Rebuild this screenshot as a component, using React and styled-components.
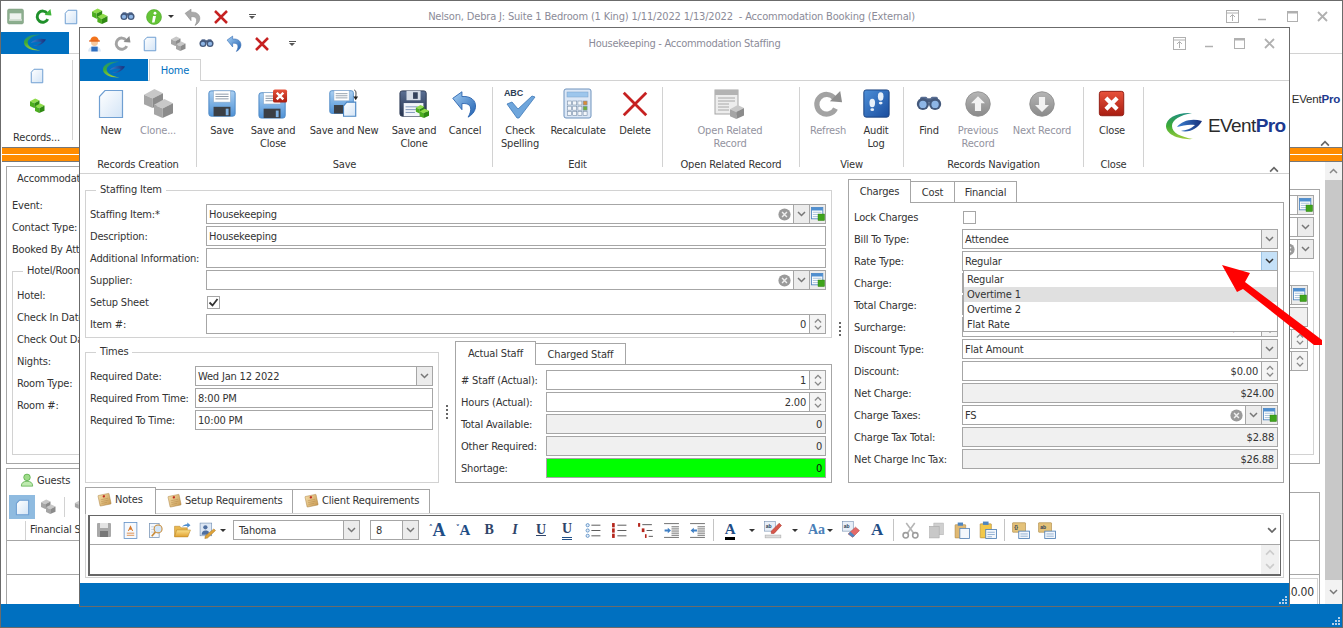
import React from 'react';
import styled, { createGlobalStyle } from 'styled-components';

const GlobalStyle = createGlobalStyle`
  html, body { margin: 0; padding: 0; background: #fff; overflow: hidden; }
  * { box-sizing: border-box; }
  body {
    font-family: "DejaVu Sans Condensed", "DejaVu Sans", "Noto Sans", sans-serif;
    font-size: 11px;
    letter-spacing: -0.18px;
    color: #333;
  }
`;

const line = '#a6a6a6';
const pale = '#d2d2d2';
const blue = '#0070c0';

/* ---------- drawings ---------- */

const Svg = ({ size = 32, vb = 32, children }) => (
  <svg width={size} height={size} viewBox={`0 0 ${vb} ${vb}`} style={{ display: 'block' }}>
    {children}
  </svg>
);

const Defs = styled.svg`
  position: absolute;
  width: 0;
  height: 0;
`;

const SharedGradients = () => (
  <Defs>
    <defs>
      <linearGradient id="pageFill" x1="0" y1="0" x2="1" y2="1">
        <stop offset="0" stopColor="#ffffff" />
        <stop offset="1" stopColor="#d3e4f6" />
      </linearGradient>
      <linearGradient id="floppy" x1="0" y1="0" x2="0" y2="1">
        <stop offset="0" stopColor="#a9cff2" />
        <stop offset="1" stopColor="#4f92d6" />
      </linearGradient>
      <linearGradient id="navy" x1="0" y1="0" x2="0" y2="1">
        <stop offset="0" stopColor="#5a6f94" />
        <stop offset="1" stopColor="#27344f" />
      </linearGradient>
      <linearGradient id="undo" x1="0" y1="0" x2="1" y2="1">
        <stop offset="0" stopColor="#a5d0f5" />
        <stop offset="1" stopColor="#1f5fb0" />
      </linearGradient>
      <linearGradient id="redBox" x1="0" y1="0" x2="0" y2="1">
        <stop offset="0" stopColor="#e8533c" />
        <stop offset="1" stopColor="#a81c10" />
      </linearGradient>
      <linearGradient id="ball" x1="0" y1="0" x2="0" y2="1">
        <stop offset="0" stopColor="#b5b5b5" />
        <stop offset="1" stopColor="#8a8a8a" />
      </linearGradient>
      <linearGradient id="book" x1="0" y1="0" x2="1" y2="1">
        <stop offset="0" stopColor="#4d8fd8" />
        <stop offset="1" stopColor="#1a4d9e" />
      </linearGradient>
      <linearGradient id="crescent" x1="0" y1="0" x2="0" y2="1">
        <stop offset="0" stopColor="#1f8f7f" />
        <stop offset="0.5" stopColor="#3dab35" />
        <stop offset="1" stopColor="#9ccc3c" />
      </linearGradient>
      <linearGradient id="lens" x1="0" y1="0" x2="1" y2="0">
        <stop offset="0" stopColor="#3a7fd0" />
        <stop offset="1" stopColor="#17307a" />
      </linearGradient>
      <linearGradient id="note" x1="0" y1="0" x2="1" y2="1">
        <stop offset="0" stopColor="#f4dca6" />
        <stop offset="1" stopColor="#c99a52" />
      </linearGradient>
      <linearGradient id="folder" x1="0" y1="0" x2="0" y2="1">
        <stop offset="0" stopColor="#fbe08a" />
        <stop offset="1" stopColor="#e0a030" />
      </linearGradient>
    </defs>
  </Defs>
);

const PageIcon = ({ size = 32 }) => (
  <Svg size={size}>
    <path d="M10 2.500h17.500v27H4.500V8.500z" fill="url(#pageFill)" stroke="#6f9fd2" strokeWidth={size < 24 ? 2 : 1.200} />
  </Svg>
);

const Cube = ({ x, y, s, tone }) => {
  const c = tone === 'green' ? ['#8fdc4a', '#4cae1f', '#2f8a12'] : ['#c8c8c8', '#a5a5a5', '#8b8b8b'];
  return (
    <g>
      <polygon points={`${x},${y + s * 0.3} ${x + s * 0.55},${y} ${x + s},${y + s * 0.22} ${x + s * 0.45},${y + s * 0.5}`} fill={c[0]} />
      <polygon points={`${x},${y + s * 0.3} ${x + s * 0.45},${y + s * 0.5} ${x + s * 0.45},${y + s} ${x},${y + s * 0.8}`} fill={c[1]} />
      <polygon points={`${x + s * 0.45},${y + s * 0.5} ${x + s},${y + s * 0.22} ${x + s},${y + s * 0.75} ${x + s * 0.45},${y + s}`} fill={c[2]} />
    </g>
  );
};

const CubesIcon = ({ size = 32, tone = 'grey' }) => (
  <Svg size={size}>
    <Cube x={2} y={1} s={19} tone={tone} />
    <Cube x={12} y={11} s={19} tone={tone} />
  </Svg>
);

const FloppyBase = ({ navy }) => (
  <g>
    <rect x="2" y="2" width="28" height="27" rx="2.500" fill={navy ? 'url(#navy)' : 'url(#floppy)'} stroke={navy ? '#2a3650' : '#4a86c4'} />
    {navy ? (
      <g>
        <rect x="9" y="2" width="15" height="10" fill="#d6dde8" />
        <rect x="16" y="3.500" width="5" height="7" fill="#33415c" />
        <rect x="6" y="15" width="21" height="14" fill="#f2f5fa" />
        <path d="M8 19h13M8 22h15M8 25h10" stroke="#7c94b8" strokeWidth="1" />
      </g>
    ) : (
      <g>
        <rect x="7" y="2" width="18" height="12" fill="#fff" stroke="#8aa9c9" strokeWidth="0.6" />
        <path d="M9 5.500h14M9 8h14M9 10.500h14" stroke="#8794a3" strokeWidth="1" />
        <rect x="7" y="19" width="18" height="10" fill="#3b3f45" />
        <rect x="20" y="21" width="3" height="7" fill="#7fb2e4" />
      </g>
    )}
  </g>
);

const SaveIcon = () => (
  <Svg size={30}>
    <FloppyBase />
  </Svg>
);

const SaveCloseIcon = () => (
  <Svg size={30}>
    <g transform="translate(-1 2)">
      <FloppyBase />
    </g>
    <rect x="16" y="0.500" width="15" height="14" rx="2" fill="url(#redBox)" />
    <path d="M20 4l7 7M27 4l-7 7" stroke="#fff" strokeWidth="2.600" />
  </Svg>
);

const SaveNewIcon = () => (
  <Svg size={30}>
    <g transform="translate(-1 0) scale(0.9)">
      <FloppyBase />
    </g>
    <path d="M19 14h9.500v15H15.500v-11z" fill="url(#pageFill)" stroke="#4a86c4" strokeWidth="1.200" />
    <path d="M27 1c2 1 2 3 1.500 8" fill="none" stroke="#222" />
    <path d="M26 8h5l-2.500 4z" fill="#222" />
  </Svg>
);

const SaveCloneIcon = () => (
  <Svg size={30}>
    <g transform="translate(-1 0)">
      <FloppyBase navy />
    </g>
    <Cube x={18} y={17} s={9} tone="green" />
    <Cube x={22} y={21} s={10} tone="green" />
  </Svg>
);

const UndoIcon = ({ size = 28 }) => (
  <Svg size={size}>
    <path
      d="M2 9.500L12.500 2v5.500C22 6.500 29 11.500 28 20c-.6 5-4.500 9-8.500 11 2.500-4 4.500-10 1.500-13.500-2-2-5-2.200-8.500-2v7z"
      fill="url(#undo)"
      stroke="#2a62ad"
      strokeWidth="1"
    />
  </Svg>
);

const GreyUndoIcon = ({ size = 18 }) => (
  <Svg size={size}>
    <path
      d="M2 9.500L12.500 2v5.500C22 6.500 29 11.500 28 20c-.6 5-4.500 9-8.500 11 2.500-4 4.500-10 1.500-13.500-2-2-5-2.200-8.500-2v7z"
      fill="#a9a9a9"
      stroke="#8a8a8a"
    />
  </Svg>
);

const CrossIcon = ({ size = 30, bold }) => (
  <Svg size={size}>
    <path d="M4 4l24 24M28 4L4 28" stroke="#c62121" strokeWidth={bold ? 5 : 3} strokeLinecap="butt" />
  </Svg>
);

const IconLabel = styled.text`
  font-family: "Liberation Sans", sans-serif;
  font-weight: 700;
  font-size: 9px;
  fill: #2c3e55;
`;

const SpellIcon = () => (
  <Svg>
    <IconLabel x="0" y="8">ABC</IconLabel>
    <path d="M3 16l5-2 6 7L28 8l3 1-16 21h-2z" fill="#6fa6dc" stroke="#3f78b8" strokeWidth="0.8" />
  </Svg>
);

const CalcIcon = () => (
  <Svg>
    <rect x="2" y="1" width="27" height="29" rx="2" fill="#dbe7f6" stroke="#6f93bd" />
    <rect x="5" y="4" width="21" height="5" fill="#9dc6ec" stroke="#7aa0c8" strokeWidth="0.5" />
    {[0, 1, 2, 3].map((c) =>
      [0, 1, 2].map((r) => (
        <rect
          key={`${c}${r}`}
          x={5.5 + c * 5.2}
          y={13 + r * 5.2}
          width="4"
          height="4"
          fill={c === 3 && r === 0 ? '#d98b3a' : c === 3 && r === 1 ? '#6fb03a' : '#f3f6fa'}
          stroke="#7a8fa8"
          strokeWidth="0.6"
        />
      )),
    )}
  </Svg>
);

const RelatedIcon = () => (
  <Svg>
    <rect x="1" y="2" width="23" height="24" fill="#ededed" stroke="#a5a5a5" />
    <rect x="1" y="2" width="23" height="5" fill="#b3b3b3" />
    <path d="M4 10h17M4 13h17M4 16h11M4 19h11M4 22h11" stroke="#a8a8a8" />
    <Cube x={16} y={17} s={14} tone="grey" />
  </Svg>
);

const RefreshIcon = ({ size = 30, color = '#a3a3a3', head = '#8e8e8e' }) => (
  <Svg size={size}>
    <path d="M24 21a10.500 10.500 0 1 1-1-11" fill="none" stroke={color} strokeWidth="5.500" />
    <path d="M18 13L31 14 29 2z" fill={head} />
  </Svg>
);

const AuditIcon = () => (
  <Svg size={30}>
    <rect x="3" y="1" width="27" height="29" rx="2.500" fill="url(#book)" stroke="#17407f" />
    <ellipse cx="21" cy="8" rx="3" ry="4.500" fill="#e8f0fa" />
    <ellipse cx="21" cy="15" rx="2" ry="1.500" fill="#e8f0fa" />
    <ellipse cx="12" cy="15" rx="3" ry="4.500" fill="#e8f0fa" />
    <ellipse cx="12" cy="22" rx="2" ry="1.500" fill="#e8f0fa" />
  </Svg>
);

const BinocularsIcon = ({ size = 26 }) => (
  <Svg size={size}>
    <rect x="12" y="9" width="8" height="5" fill="#4c5f80" />
    <rect x="5" y="7" width="9" height="5" rx="2" fill="#5a6f94" />
    <rect x="18" y="7" width="9" height="5" rx="2" fill="#5a6f94" />
    <circle cx="8.500" cy="16" r="7.500" fill="#44597c" />
    <circle cx="23.500" cy="16" r="7.500" fill="#44597c" />
    <circle cx="8.500" cy="16.500" r="4.500" fill="#8eb6e6" />
    <circle cx="23.500" cy="16.500" r="4.500" fill="#8eb6e6" />
  </Svg>
);

const ArrowBallIcon = ({ down }) => (
  <Svg size={28}>
    <circle cx="16" cy="16" r="14" fill="url(#ball)" stroke="#8f8f8f" />
    <path
      d={down ? 'M12.500 8h7v9h4.500L16 25 8 17h4.500z' : 'M12.500 24h7v-9h4.500L16 7 8 15h4.500z'}
      fill="#f2f2f2"
    />
  </Svg>
);

const CloseBoxIcon = () => (
  <Svg size={30}>
    <rect x="2.500" y="2.500" width="26" height="26" rx="2.500" fill="url(#redBox)" stroke="#8f1a10" />
    <path d="M9.500 9.500l12 12M21.500 9.500l-12 12" stroke="#fff" strokeWidth="4.500" />
  </Svg>
);

const PersonIcon = () => (
  <Svg size={17}>
    <circle cx="16" cy="14" r="6.500" fill="#f6c9a0" />
    <path d="M8 11a8 8 0 0 1 16 0z" fill="#f2731c" />
    <rect x="6" y="10" width="20" height="2.500" fill="#e05a10" />
    <path d="M4 31c0-7 5-10 12-10s12 3 12 10z" fill="#dce8f5" />
    <path d="M10 22h12v9H10z" fill="#2f6fc0" />
  </Svg>
);

const BedIcon = () => (
  <Svg size={17}>
    <rect x="1" y="2" width="30" height="28" rx="3" fill="#8cae8e" stroke="#7a9a7c" />
    <rect x="5" y="10" width="22" height="11" fill="#eef3ee" />
    <rect x="4" y="21" width="24" height="3" fill="#dfe8df" />
  </Svg>
);

const InfoIcon = () => (
  <Svg size={16}>
    <circle cx="16" cy="16" r="15" fill="#64c437" stroke="#3f9c1c" />
    <circle cx="18" cy="8.500" r="2.800" fill="#fff" />
    <path d="M14 14h6l-3 13h-5z" fill="#fff" />
  </Svg>
);

const AddTableIcon = () => (
  <Svg size={14} vb={16}>
    <rect x="0.500" y="0.500" width="13" height="13" fill="#fff" stroke="#4f86c0" />
    <rect x="0.500" y="0.500" width="13" height="3.500" fill="#4f8fd0" />
    <path d="M2 6h10M2 8.500h10M2 11h10" stroke="#9db9d6" />
    <rect x="8" y="8" width="7.500" height="7.500" fill="#3fa41c" stroke="#2c7d12" strokeWidth="0.5" />
  </Svg>
);

const ClearIcon = () => (
  <Svg size={13} vb={16}>
    <circle cx="8" cy="8" r="7.500" fill="#9a9a9a" />
    <path d="M5 5l6 6M11 5l-6 6" stroke="#eee" strokeWidth="1.800" />
  </Svg>
);

const ChevSvg = styled.svg`
  display: block;
  flex: none;
`;

const Chev = ({ up, color = '#777', w = 9 }) => (
  <ChevSvg width={w} height={w * 0.67} viewBox="0 0 9 6">
    <path d={up ? 'M1 5l3.500-3.500L8 5' : 'M1 1l3.500 3.500L8 1'} fill="none" stroke={color} strokeWidth="1.500" />
  </ChevSvg>
);

const NoteIcon = () => (
  <Svg size={15}>
    <g transform="rotate(-12 16 16)">
      <rect x="4" y="5" width="24" height="23" rx="1" fill="url(#note)" stroke="#a9803f" />
      <path d="M8 15h16M8 19h16M8 23h12" stroke="#b58c4d" />
      <circle cx="16" cy="9" r="2.500" fill="#c12b1f" />
    </g>
  </Svg>
);

const GuestIcon = () => (
  <Svg size={14}>
    <circle cx="16" cy="10" r="7.500" fill="#9fdc8a" stroke="#4aa43a" strokeWidth="1.500" />
    <path d="M3 30c0-8 5-11 13-11s13 3 13 11z" fill="#bfeab0" stroke="#4aa43a" strokeWidth="1.500" />
  </Svg>
);

const Swoosh = ({ w = 36 }) => (
  <svg width={w} height={w * 0.78} viewBox="0 0 36 28" style={{ display: 'block' }}>
    <path d="M26 1C11 0 0 6 0 14c0 8 12 14 27 13C15 25 6 21 6 14 6 8 14 3 26 1z" fill="url(#crescent)" />
    <path d="M11 15C16 9 25 6 36 9c-4 7-12 12-21 10 5-1 10-2 14-6-5-1-12 0-18 2z" fill="url(#lens)" />
  </svg>
);

/* toolbar drawings */
const TbSave = () => (
  <Svg size={16}>
    <rect x="2" y="2" width="28" height="28" rx="2" fill="#a8a8a8" />
    <rect x="8" y="2" width="16" height="10" fill="#e4e4e4" />
    <rect x="8" y="18" width="16" height="12" fill="#777" />
  </Svg>
);

const TbDoc = () => (
  <Svg size={17}>
    <rect x="4" y="1" width="24" height="30" fill="#f6f9fd" stroke="#5f8fc6" strokeWidth="1.500" />
    <path d="M16 6l-5 11h2l1-2.500h4l1 2.500h2z" fill="#d87a2c" />
    <path d="M9 21h14M9 25h14" stroke="#d87a2c" strokeWidth="1.500" />
  </Svg>
);

const TbFind = () => (
  <Svg size={17}>
    <rect x="3" y="3" width="18" height="26" fill="#f5f8fc" stroke="#7d98b8" strokeWidth="1.500" />
    <path d="M6 9h12M6 14h7M6 19h7" stroke="#9db0c6" />
    <circle cx="19" cy="13" r="7.500" fill="#d3e6f8" stroke="#c98a35" strokeWidth="2" />
    <path d="M14 19l-7 8" stroke="#c98a35" strokeWidth="3" />
  </Svg>
);

const TbOpen = () => (
  <Svg size={17}>
    <path d="M1 8h10l2 3h12v16H1z" fill="#e9b84f" stroke="#b8862a" />
    <path d="M5 15h26l-5 13H1z" fill="url(#folder)" stroke="#b8862a" />
    <path d="M15 9c3-4 7-5 10-5V1l6 5-6 5V7.500c-3 0-6 0-10 1.500z" fill="#4f8fd0" />
  </Svg>
);

const TbEdit = () => (
  <Svg size={17}>
    <rect x="2" y="2" width="22" height="24" fill="#dde7f4" stroke="#5f7fa8" />
    <circle cx="12" cy="10" r="4" fill="#4f6fa0" />
    <path d="M5 24c0-6 3-8 7-8s6 1 7 3l-3 5z" fill="#4f6fa0" />
    <path d="M28 13l3 3-15 14-5 1 1-5z" fill="#e0a43a" stroke="#a8741c" />
  </Svg>
);

const Caret = styled.span`
  display: block;
  width: 0;
  height: 0;
  margin-left: ${(p) => p.$ml || 0}px;
  border-left: 3.500px solid transparent;
  border-right: 3.500px solid transparent;
  border-top: 3.500px solid #333;
`;

const ListBullets = () => (
  <Svg size={17}>
    {[6, 16, 26].map((y) => (
      <g key={y}>
        <circle cx="5" cy={y} r="3" fill="#e4eef9" stroke="#4f86c0" strokeWidth="1.500" />
        <path d={`M12 ${y}h17`} stroke="#333" strokeWidth="1.500" />
      </g>
    ))}
  </Svg>
);

const ListNumbers = () => (
  <Svg size={17}>
    {[6, 16, 26].map((y) => (
      <g key={y}>
        <rect x="2" y={y - 4} width="5" height="8" fill="#b5261c" />
        <path d={`M12 ${y}h17`} stroke="#333" strokeWidth="1.500" />
      </g>
    ))}
  </Svg>
);

const ListMulti = () => (
  <Svg size={17}>
    <rect x="2" y="2" width="4" height="7" fill="#b5261c" />
    <path d="M10 5h18" stroke="#333" strokeWidth="1.500" />
    <rect x="9" y="12" width="5" height="7" fill="#b5261c" />
    <path d="M18 16h11" stroke="#333" strokeWidth="1.500" />
    <rect x="15" y="23" width="3" height="7" fill="#b5261c" />
    <path d="M22 27h8" stroke="#333" strokeWidth="1.500" />
  </Svg>
);

const Indent = ({ flip }) => (
  <Svg size={17}>
    <path d="M2 3h28M2 29h28M16 9h14M16 13h14M16 17h14M16 21h14M16 25h14" stroke="#333" strokeWidth="1.300" />
    <path d={flip ? 'M3 16l6-5v3h6v4H9v3z' : 'M15 16l-6-5v3H3v4h6v3z'} fill="#3f7fc4" />
  </Svg>
);

const TbHighlight = () => (
  <Svg size={18}>
    <rect x="1" y="1" width="19" height="17" fill="#e8eff8" stroke="#6c88ac" />
    <IconLabel x="3" y="13">ab</IconLabel>
    <path d="M27 4l4 4-13 14h-5v-4z" fill="#d8574a" stroke="#a8332a" />
    <rect x="2" y="25" width="28" height="5" fill="#ddd" stroke="#aaa" />
  </Svg>
);

const TbEraser = () => (
  <Svg size={18}>
    <rect x="1" y="1" width="19" height="17" fill="#e8eff8" stroke="#6c88ac" />
    <IconLabel x="3" y="13">ab</IconLabel>
    <path d="M24 11l7 6-12 12-8-6z" fill="#e46a68" stroke="#b03c3a" />
    <path d="M15 19l8 7-4 3-8-6z" fill="#4f86c0" />
  </Svg>
);

const TbCut = () => (
  <Svg size={17}>
    <path d="M8 2l14 19M24 2L10 21" stroke="#b5b5b5" strokeWidth="3" />
    <circle cx="7" cy="25" r="5" fill="none" stroke="#9d9d9d" strokeWidth="3" />
    <circle cx="25" cy="25" r="5" fill="none" stroke="#9d9d9d" strokeWidth="3" />
  </Svg>
);

const TbCopy = () => (
  <Svg size={17}>
    <rect x="11" y="2" width="18" height="22" fill="#d0d0d0" stroke="#b0b0b0" />
    <rect x="3" y="8" width="18" height="22" fill="#c8c8c8" stroke="#a5a5a5" />
  </Svg>
);

const TbPaste = ({ special }) => (
  <Svg size={special ? 18 : 17}>
    <rect x="2" y="5" width="20" height="25" rx="1" fill={special ? '#f2c84a' : '#e0b973'} stroke="#a8803a" />
    <rect x="7" y="1" width="10" height="6" fill="#4f86c0" />
    <rect x={special ? 12 : 11} y={special ? 15 : 12} width={special ? 19 : 18} height={special ? 16 : 19} fill="#f3f7fc" stroke="#4f7fb5" strokeWidth="1.500" />
    {special && <path d="M15 20h13M15 24h13M15 28h8" stroke="#4f7fb5" />}
  </Svg>
);

const TbField = ({ text }) => (
  <Svg size={18}>
    <rect x="1" y="3" width="23" height="17" rx="1" fill="#e4c27a" stroke="#a5803a" />
    <IconLabel x="4" y="15">{text}</IconLabel>
    <rect x="12" y="18" width="19" height="13" fill="#f3f7fc" stroke="#4f7fb5" strokeWidth="1.500" />
    <path d="M15 23h13M15 27h13" stroke="#4f7fb5" />
  </Svg>
);

const RedArrow = styled.svg`
  position: absolute;
  left: 0;
  top: 0;
  z-index: 10;
  pointer-events: none;
`;

/* ---------- window chrome ---------- */

const Desktop = styled.div`
  position: relative;
  width: 1343px;
  height: 628px;
  overflow: hidden;
  background: #fff;
`;

const BackWindow = styled.div`
  display: flex;
  flex-direction: column;
  width: 1343px;
  height: 628px;
  border: 1px solid #6b6b6b;
  background: #fff;
`;

const FrontWindow = styled.div`
  position: absolute;
  left: 79px;
  top: 27px;
  width: 1211px;
  height: 580px;
  display: flex;
  flex-direction: column;
  border: 1px solid #6b6b6b;
  background: #fff;
  z-index: 2;
`;

const TitleBar = styled.div`
  display: grid;
  grid-template-columns: 1fr auto 1fr;
  align-items: center;
  flex: none;
  height: ${(p) => p.$h}px;
`;

const QuickAccess = styled.div`
  display: flex;
  align-items: center;
`;

const QuickSlot = styled.div`
  display: flex;
  align-items: center;
  justify-content: center;
  flex: none;
  gap: 6px;
  width: ${(p) => p.$w || 28}px;
  height: 24px;
  margin-left: ${(p) => p.$ml || 0}px;
`;

const MoreMark = styled.div`
  width: 7px;
  border-top: 1px solid #555;
  padding-top: 1px;
  &::after {
    content: '';
    display: block;
    width: 0;
    height: 0;
    border-left: 3.500px solid transparent;
    border-right: 3.500px solid transparent;
    border-top: 3.500px solid #555;
  }
`;

const WindowTitle = styled.div`
  font-size: 11px;
  letter-spacing: ${(p) => p.$ls}px;
  color: #8b8b98;
  white-space: nowrap;
`;

const WindowControls = styled.div`
  display: flex;
  justify-content: flex-end;
  align-items: center;
  padding-right: ${(p) => p.$pr}px;
`;

const ControlSlot = styled.div`
  width: 30px;
  display: flex;
  justify-content: center;
`;

const Controls = ({ pr }) => (
  <WindowControls $pr={pr}>
    <ControlSlot>
      <Svg size={13} vb={13}>
        <rect x="0.500" y="0.500" width="12" height="12" fill="none" stroke="#b0b0b0" />
        <path d="M1 3h11M6.500 11V5M4 7l2.500-2.500L9 7" fill="none" stroke="#b0b0b0" />
      </Svg>
    </ControlSlot>
    <ControlSlot>
      <Svg size={13} vb={13}>
        <path d="M2 9.500h8" stroke="#b0b0b0" strokeWidth="1.500" />
      </Svg>
    </ControlSlot>
    <ControlSlot>
      <Svg size={11} vb={11}>
        <rect x="0.500" y="0.500" width="10" height="10" fill="none" stroke="#b0b0b0" />
        <path d="M0 1.500h11" stroke="#b0b0b0" strokeWidth="2" />
      </Svg>
    </ControlSlot>
    <ControlSlot>
      <Svg size={11} vb={11}>
        <path d="M1 1l9 9M10 1l-9 9" stroke="#b0b0b0" strokeWidth="1.800" />
      </Svg>
    </ControlSlot>
  </WindowControls>
);

const TabLine = styled.div`
  display: flex;
  flex: none;
  height: 22px;
  border-bottom: 1px solid ${pale};
`;

const AppButton = styled.div`
  display: flex;
  align-items: center;
  justify-content: center;
  width: 68px;
  height: 22px;
  flex: none;
  background: ${blue};
`;

const HomeTab = styled.div`
  display: flex;
  align-items: center;
  justify-content: center;
  width: 52px;
  height: 22px;
  color: ${blue};
  background: #fff;
  border: 1px solid ${pale};
  border-bottom: 0;
  margin-left: 1px;
`;

const Ribbon = styled.div`
  display: flex;
  flex: none;
  height: 93px;
  padding-top: 6px;
  border-bottom: 1px solid ${pale};
`;

const RibbonGroup = styled.div`
  display: flex;
  flex-direction: column;
  flex: none;
  width: ${(p) => p.$w}px;
  height: 80px;
  padding-left: ${(p) => p.$pl || 0}px;
  border-right: 1px solid ${pale};
`;

const RibbonButtons = styled.div`
  display: flex;
  flex: none;
  height: 71px;
`;

const RibbonCaption = styled.div`
  margin-left: ${(p) => -(p.$pl || 0)}px;
  text-align: center;
  line-height: 13px;
  white-space: nowrap;
`;

const RibbonItem = styled.div`
  display: flex;
  flex-direction: column;
  align-items: center;
  flex: none;
  width: ${(p) => p.$w}px;
  padding-top: 1px;
  text-align: center;
  line-height: 13px;
  color: ${(p) => (p.$off ? '#9393a0' : '#333')};
`;

const RibbonIconBox = styled.div`
  display: flex;
  align-items: center;
  justify-content: center;
  height: 32px;
  margin-bottom: 4px;
  flex: none;
`;

const RibbonButton = ({ w, off, icon, children }) => (
  <RibbonItem $w={w} $off={off}>
    <RibbonIconBox>{icon}</RibbonIconBox>
    {children}
  </RibbonItem>
);

const LogoGroup = styled.div`
  display: flex;
  flex-direction: column;
  flex: 1;
  padding-top: 25px;
`;

const LogoRow = styled.div`
  display: flex;
  align-items: center;
  gap: 6px;
  padding-left: 22px;
`;

const LogoWord = styled.span`
  font-family: "Liberation Sans", sans-serif;
  font-size: ${(p) => p.$size}px;
  letter-spacing: ${(p) => (p.$size > 14 ? -0.6 : -0.2)}px;
  color: #2b2b2b;
  white-space: nowrap;
`;

const LogoPro = styled.b`
  color: #1d3a8f;
`;

const Collapse = styled.div`
  margin-top: auto;
  align-self: flex-end;
  margin-right: 10px;
`;

/* ---------- form parts ---------- */

const GroupBox = styled.fieldset`
  margin: ${(p) => p.$mt || 0}px 0 0;
  min-width: 0;
  width: ${(p) => p.$w};
  height: ${(p) => p.$h}px;
  padding: ${(p) => p.$pt || 7}px ${(p) => p.$pr || 5}px 0 ${(p) => p.$pl || 4}px;
  border: 1px solid ${pale};
  flex: none;
`;

const GroupTitle = styled.legend`
  margin-left: 6px;
  padding: 0 4px;
  line-height: 14px;
`;

const Row = styled.div`
  display: flex;
  align-items: center;
  height: 20px;
  margin-top: ${(p) => p.$mt || 0}px;
  margin-bottom: 2px;
`;

const Label = styled.div`
  flex: none;
  width: ${(p) => p.$w}px;
  white-space: nowrap;
  overflow: visible;
`;

const toneFill = { plain: '#fff', read: '#f0f0f0', good: '#00ff00' };

const InputBox = styled.div`
  display: flex;
  align-items: stretch;
  flex: 1;
  min-width: 0;
  height: 20px;
  border: 1px solid ${line};
  background: ${(p) => toneFill[p.$tone || 'plain']};
  color: ${(p) => (p.$tone === 'good' ? '#111' : '#333')};
`;

const InputText = styled.div`
  flex: 1;
  line-height: 19px;
  padding: 0 3px 0 2px;
  white-space: nowrap;
  text-align: ${(p) => p.$align || 'left'};
`;

const EndButton = styled.div`
  display: flex;
  flex-direction: column;
  align-items: center;
  justify-content: center;
  flex: none;
  width: 16px;
  background: ${(p) => (p.$hot ? '#c5e1f8' : '#ececec')};
  border-left: 1px solid ${(p) => (p.$hot ? '#9cc4e6' : line)};
`;

const SpinButton = styled(EndButton)`
  gap: 2px;
  background: #f4f4f4;
`;

const ClearSlot = styled.div`
  display: flex;
  align-items: center;
  justify-content: center;
  flex: none;
  width: 17px;
`;

const Drop = ({ hot }) => (
  <EndButton $hot={hot}>
    <Chev color={hot ? '#333' : '#777'} />
  </EndButton>
);

const Spin = () => (
  <SpinButton>
    <Chev up w={8} color="#888" />
    <Chev w={8} color="#888" />
  </SpinButton>
);

const AddBtn = () => (
  <EndButton>
    <AddTableIcon />
  </EndButton>
);

const Lookup = () => (
  <>
    <ClearSlot>
      <ClearIcon />
    </ClearSlot>
    <Drop />
    <AddBtn />
  </>
);

const Field = ({ label, w, value, tone, align, mt, children }) => (
  <Row $mt={mt}>
    <Label $w={w}>{label}</Label>
    <InputBox $tone={tone}>
      <InputText $align={align}>{value}</InputText>
      {children}
    </InputBox>
  </Row>
);

const CheckBox = styled.div`
  display: flex;
  align-items: center;
  justify-content: center;
  width: 13px;
  height: 13px;
  margin-left: 1px;
  border: 1px solid ${line};
  background: #fff;
`;

const Splitter = styled.div`
  flex: none;
  width: 2px;
  height: 14px;
  margin: ${(p) => p.$mt}px 7px 0;
  background: repeating-linear-gradient(to bottom, #666 0 2px, transparent 2px 4px);
`;

const Tabs = styled.div`
  display: flex;
  align-items: flex-end;
  flex: none;
  height: ${(p) => p.$h || 23}px;
  margin-top: ${(p) => p.$mt || 0}px;
  position: relative;
  z-index: 1;
`;

const Tab = styled.div`
  display: flex;
  align-items: center;
  justify-content: ${(p) => (p.$start ? 'flex-start' : 'center')};
  gap: 3px;
  flex: none;
  width: ${(p) => p.$w}px;
  height: ${(p) => (p.$on ? p.$hi || 24 : p.$lo || 21)}px;
  padding-left: ${(p) => p.$start || 0}px;
  padding-bottom: ${(p) => p.$pb || 0}px;
  margin-bottom: ${(p) => (p.$on ? -1 : 0)}px;
  margin-left: ${(p) => (p.$on ? 0 : -1)}px;
  background: #fff;
  border: 1px solid ${line};
  border-bottom: 0;
  white-space: nowrap;
`;

const Pane = styled.div`
  position: relative;
  flex: none;
  height: ${(p) => p.$h}px;
  padding: ${(p) => p.$pt || 5}px 5px 0 5px;
  border: 1px solid ${line};
`;

const DropList = styled.div`
  position: absolute;
  left: 114px;
  top: 67px;
  width: 315px;
  height: 62px;
  padding-top: 1px;
  background: #fff;
  border: 1px solid ${line};
  z-index: 3;
`;

const DropItem = styled.div`
  height: 15px;
  line-height: 15px;
  padding-left: 3px;
  background: ${(p) => (p.$hover ? '#e0e0e0' : 'transparent')};
`;

/* ---------- front window layout ---------- */

const FrontBody = styled.div`
  flex: 1;
  display: flex;
  flex-direction: column;
  padding-left: 5px;
  min-height: 0;
`;

const Columns = styled.div`
  display: flex;
  flex: none;
  height: 309px;
`;

const LeftCol = styled.div`
  display: flex;
  flex-direction: column;
  flex: none;
  width: 747px;
  padding-top: 9px;
`;

const LowerRow = styled.div`
  display: flex;
  margin-top: 3px;
`;

const StaffCol = styled.div`
  display: flex;
  flex-direction: column;
  flex: none;
  width: 377px;
`;

const RightCol = styled.div`
  display: flex;
  flex-direction: column;
  flex: none;
  width: 436px;
  padding-top: 5px;
`;

const NotesArea = styled.div`
  display: flex;
  flex-direction: column;
  flex: none;
  width: 1199px;
  margin-top: 4px;
`;

const NotesPane = styled.div`
  flex: none;
  height: 65px;
  padding: 1px 2px;
  border: 1px solid ${pale};
  background: #fff;
`;

const Editor = styled.div`
  display: flex;
  flex-direction: column;
  height: 61px;
  border: 1px solid #666;
  border-bottom-width: 2px;
  border-left-width: 2px;
`;

const ToolStrip = styled.div`
  display: flex;
  align-items: center;
  flex: none;
  height: 29px;
  padding-left: 1px;
  border-bottom: 1px solid ${line};
`;

const ToolSlot = styled.div`
  display: flex;
  align-items: center;
  justify-content: center;
  flex: none;
  width: ${(p) => p.$w || 26}px;
  height: 24px;
  margin-left: ${(p) => p.$ml || 0}px;
`;

const ToolSep = styled.div`
  flex: none;
  width: 1px;
  height: 22px;
  margin: 0 3px;
  background: #c4c4c4;
`;

const Combo = styled.div`
  display: flex;
  flex: none;
  width: ${(p) => p.$w}px;
  height: 20px;
  margin-left: ${(p) => p.$ml}px;
  border: 1px solid ${line};
`;

const Glyph = styled.span`
  font-family: "Liberation Serif", serif;
  font-weight: 700;
  font-size: ${(p) => p.$size || 16}px;
  font-style: ${(p) => (p.$it ? 'italic' : 'normal')};
  line-height: 16px;
  color: ${(p) => p.$color || '#1f4e86'};
  text-decoration: ${(p) => p.$deco || 'none'};
`;

const GrowMark = styled.span`
  font-size: 9px;
  font-weight: 700;
  line-height: 8px;
  align-self: flex-start;
  margin-top: 6px;
  color: #1f4e86;
`;

const UnderBar = styled.div`
  display: flex;
  flex-direction: column;
  align-items: center;
  border-bottom: 3px solid #000;
  line-height: 14px;
`;

const DoubleUnder = styled.div`
  border-bottom: 3px double #1f4e86;
  line-height: 13px;
`;

const ToolEnd = styled.div`
  margin: 0 3px 0 auto;
`;

const EditorBody = styled.div`
  display: flex;
  justify-content: flex-end;
  flex: 1;
`;

const EditorScroll = styled.div`
  display: flex;
  flex-direction: column;
  align-items: center;
  justify-content: space-around;
  width: 18px;
  margin-right: 1px;
  background: #f0f0f0;
`;

const Footer = styled.div`
  display: flex;
  justify-content: flex-end;
  align-items: flex-end;
  flex: none;
  height: ${(p) => p.$h}px;
  margin-top: ${(p) => p.$mt || 0}px;
  background: ${blue};
  padding: 0 1px 1px 0;
`;

const Grip = () => (
  <svg width="10" height="10" viewBox="0 0 10 10" style={{ display: 'block' }}>
    {[
      [7, 1],
      [4, 4],
      [7, 4],
      [1, 7],
      [4, 7],
      [7, 7],
    ].map(([x, y]) => (
      <rect key={`${x}${y}`} x={x} y={y} width="2" height="2" fill="#b4cfe8" />
    ))}
  </svg>
);

/* ---------- back window layout ---------- */

const BackRibbon = styled.div`
  display: flex;
  flex: none;
  height: 93px;
  padding-top: 6px;
`;

const BackRecords = styled.div`
  display: flex;
  flex-direction: column;
  align-items: center;
  flex: none;
  width: 72px;
  height: 80px;
  padding-top: 8px;
  border-right: 1px solid ${pale};
`;

const BackIconStack = styled.div`
  display: flex;
  flex-direction: column;
  align-items: center;
  gap: 14px;
`;

const BackRecordsLabel = styled.div`
  margin-top: 17px;
  line-height: 13px;
`;

const BackLogo = styled.div`
  display: flex;
  flex: 1;
  flex-direction: column;
  align-items: flex-end;
  padding: 33px 2px 0 0;
`;

const OrangeBar = styled.div`
  flex: none;
  height: 15px;
  margin-left: 1px;
  border-top: 1px solid #777;
  border-bottom: 1px solid #777;
  background: linear-gradient(to bottom, #ff8c00 0 6px, #fff 6px 7px, #ff8c00 7px);
`;

const BackBody = styled.div`
  flex: 1;
  display: flex;
  min-height: 0;
`;

const BackContent = styled.div`
  display: flex;
  flex-direction: column;
  flex: 1;
  min-width: 0;
  padding: 4px 5px 0;
  overflow: hidden;
`;

const Scrollbar = styled.div`
  display: flex;
  flex-direction: column;
  flex: none;
  width: 17px;
`;

const ScrollEnd = styled.div`
  display: flex;
  align-items: center;
  justify-content: center;
  flex: none;
  height: ${(p) => p.$h}px;
  background: #f2f2f2;
`;

const ScrollTrack = styled.div`
  flex: 1;
  background: #c8c8c8;
`;

const GuestBox = styled.div`
  display: flex;
  flex-direction: column;
  flex: 1;
  border: 1px solid ${line};
  border-bottom: 0;
`;

const GuestTools = styled.div`
  display: flex;
  align-items: center;
  flex: none;
  height: 28px;
  padding-left: 2px;
`;

const GuestToolOn = styled.div`
  display: flex;
  align-items: center;
  justify-content: center;
  width: 26px;
  height: 24px;
  background: #8fbbe0;
`;

const GuestToolSlot = styled.div`
  display: flex;
  align-items: center;
  justify-content: center;
  width: 26px;
`;

const GuestToolSep = styled.div`
  width: 1px;
  height: 20px;
  margin: 0 3px;
  background: ${pale};
`;

const GuestHeader = styled.div`
  flex: none;
  height: 19px;
  margin-left: 18px;
  padding-left: 4px;
  line-height: 18px;
  border-left: 1px solid ${pale};
  white-space: nowrap;
`;

const GuestRow = styled.div`
  flex: none;
  height: 34px;
  border-top: 1px solid ${line};
`;

const GuestTotal = styled.div`
  display: flex;
  justify-content: flex-end;
  flex: 1;
  padding: 3px 1px 0 0;
  border-top: 1px solid ${line};
`;

const TotalBox = styled.div`
  width: 90px;
  height: 30px;
  padding: 6px 3px 0 0;
  border: 1px solid ${pale};
  text-align: right;
  font-size: 12px;
`;

const back = 100;

const BackWindowContent = () => (
  <BackWindow>
    <TitleBar $h={31}>
      <QuickAccess>
        <QuickSlot><BedIcon /></QuickSlot>
        <QuickSlot><RefreshIcon size={17} color="#1f8f2a" head="#3fb53a" /></QuickSlot>
        <QuickSlot><PageIcon size={16} /></QuickSlot>
        <QuickSlot><CubesIcon size={17} tone="green" /></QuickSlot>
        <QuickSlot><BinocularsIcon size={15} /></QuickSlot>
        <QuickSlot $w={38}><InfoIcon /><Caret /></QuickSlot>
        <QuickSlot><GreyUndoIcon /></QuickSlot>
        <QuickSlot><CrossIcon size={16} bold /></QuickSlot>
        <QuickSlot $ml={3}><MoreMark /></QuickSlot>
      </QuickAccess>
      <WindowTitle $ls={-0.17}>Nelson, Debra J: Suite 1 Bedroom (1 King) 1/11/2022 1/13/2022&nbsp; - Accommodation Booking (External)</WindowTitle>
      <Controls pr={5} />
    </TitleBar>
    <TabLine>
      <AppButton><Swoosh w={22} /></AppButton>
    </TabLine>
    <BackRibbon>
      <BackRecords>
        <BackIconStack>
          <PageIcon size={16} />
          <CubesIcon size={16} tone="green" />
        </BackIconStack>
        <BackRecordsLabel>Records...</BackRecordsLabel>
      </BackRecords>
      <BackLogo>
        <LogoWord $size={11.5}>EVent<LogoPro>Pro</LogoPro></LogoWord>
        <Collapse><Chev up color="#666" w={10} /></Collapse>
      </BackLogo>
    </BackRibbon>
    <OrangeBar />
    <BackBody>
      <BackContent>
        <Tabs>
          <Tab $w={100} $on $start={10}>Accommodation</Tab>
        </Tabs>
        <Pane $h={275}>
          <Field label="Event:" w={back} value=""><AddBtn /></Field>
          <Field label="Contact Type:" w={back} value=""><Drop /></Field>
          <Field label="Booked By Attendee:" w={back} value=""><ClearSlot><ClearIcon /></ClearSlot><Drop /></Field>
          <GroupBox $w="100%" $h={191} $mt={5}>
            <GroupTitle>Hotel/Room</GroupTitle>
            <Field label="Hotel:" w={back} value=""><AddBtn /></Field>
            <Field label="Check In Date:" w={back} value="" tone="read" />
            <Field label="Check Out Date:" w={back} value=""><Spin /></Field>
            <Field label="Nights:" w={back} value=""><Spin /></Field>
            <Row><Label $w={back}>Room Type:</Label></Row>
            <Row><Label $w={back}>Room #:</Label></Row>
          </GroupBox>
        </Pane>
        <Tabs $h={24} $mt={4}>
          <Tab $w={100} $on $hi={25} $start={13} $pb={2}><GuestIcon />Guests</Tab>
        </Tabs>
        <GuestBox>
          <GuestTools>
            <GuestToolOn><PageIcon size={17} /></GuestToolOn>
            <GuestToolSlot><CubesIcon size={16} /></GuestToolSlot>
            <GuestToolSep />
            <GuestToolSlot><CubesIcon size={14} /></GuestToolSlot>
          </GuestTools>
          <GuestHeader>Financial Status</GuestHeader>
          <GuestRow />
          <GuestTotal><TotalBox>$0.00</TotalBox></GuestTotal>
        </GuestBox>
      </BackContent>
      <Scrollbar>
        <ScrollEnd $h={18}><Chev up color="#888" /></ScrollEnd>
        <ScrollTrack />
        <ScrollEnd $h={24}><Chev color="#777" /></ScrollEnd>
      </Scrollbar>
    </BackBody>
    <Footer $h={23}><Grip /></Footer>
  </BackWindow>
);

const Notes = () => (
  <NotesArea>
    <Tabs $h={26}>
      <Tab $w={71} $on $hi={27} $start={11} $pb={4}><NoteIcon />Notes</Tab>
      <Tab $w={138} $lo={24} $start={11} $pb={2}><NoteIcon />Setup Requirements</Tab>
      <Tab $w={138} $lo={24} $start={11} $pb={2}><NoteIcon />Client Requirements</Tab>
    </Tabs>
    <NotesPane>
      <Editor>
        <ToolStrip>
          <ToolSlot><TbSave /></ToolSlot>
          <ToolSlot><TbDoc /></ToolSlot>
          <ToolSlot><TbFind /></ToolSlot>
          <ToolSlot><TbOpen /></ToolSlot>
          <ToolSlot $w={34}><TbEdit /><Caret $ml={4} /></ToolSlot>
          <Combo $w={127} $ml={4}>
            <InputText>&nbsp;Tahoma</InputText>
            <Drop />
          </Combo>
          <Combo $w={49} $ml={10}>
            <InputText>&nbsp;8</InputText>
            <Drop />
          </Combo>
          <ToolSlot $ml={5}><GrowMark>˄</GrowMark><Glyph $size={18}>A</Glyph></ToolSlot>
          <ToolSlot><GrowMark>˅</GrowMark><Glyph $size={15}>A</Glyph></ToolSlot>
          <ToolSlot><Glyph $size={14} $color="#2f4468">B</Glyph></ToolSlot>
          <ToolSlot><Glyph $size={14} $it $color="#2f4468">I</Glyph></ToolSlot>
          <ToolSlot><Glyph $size={14} $deco="underline" $color="#2f4468">U</Glyph></ToolSlot>
          <ToolSlot><DoubleUnder><Glyph $size={14} $color="#2f4468">U</Glyph></DoubleUnder></ToolSlot>
          <ToolSlot><ListBullets /></ToolSlot>
          <ToolSlot><ListNumbers /></ToolSlot>
          <ToolSlot><ListMulti /></ToolSlot>
          <ToolSlot><Indent /></ToolSlot>
          <ToolSlot><Indent flip /></ToolSlot>
          <ToolSep />
          <ToolSlot><UnderBar><Glyph $size={15}>A</Glyph></UnderBar></ToolSlot>
          <ToolSlot $w={17}><Caret /></ToolSlot>
          <ToolSlot><TbHighlight /></ToolSlot>
          <ToolSlot $w={17}><Caret /></ToolSlot>
          <ToolSlot $w={35}><Glyph $size={14} $color="#4a7fb8">Aa</Glyph><Caret $ml={2} /></ToolSlot>
          <ToolSlot><TbEraser /></ToolSlot>
          <ToolSlot><Glyph $size={17}>A</Glyph></ToolSlot>
          <ToolSep />
          <ToolSlot><TbCut /></ToolSlot>
          <ToolSlot><TbCopy /></ToolSlot>
          <ToolSlot><TbPaste /></ToolSlot>
          <ToolSlot><TbPaste special /></ToolSlot>
          <ToolSep />
          <ToolSlot><TbField text="{}" /></ToolSlot>
          <ToolSlot><TbField text="ab" /></ToolSlot>
          <ToolEnd><Chev color="#666" w={10} /></ToolEnd>
        </ToolStrip>
        <EditorBody>
          <EditorScroll>
            <Chev up color="#ccc" w={10} />
            <Chev color="#ccc" w={10} />
          </EditorScroll>
        </EditorBody>
      </Editor>
    </NotesPane>
  </NotesArea>
);

const FrontWindowContent = () => (
  <FrontWindow>
    <TitleBar $h={31}>
      <QuickAccess>
        <QuickSlot><PersonIcon /></QuickSlot>
        <QuickSlot><RefreshIcon size={17} /></QuickSlot>
        <QuickSlot><PageIcon size={16} /></QuickSlot>
        <QuickSlot><CubesIcon size={16} /></QuickSlot>
        <QuickSlot><BinocularsIcon size={15} /></QuickSlot>
        <QuickSlot><UndoIcon size={17} /></QuickSlot>
        <QuickSlot><CrossIcon size={16} bold /></QuickSlot>
        <QuickSlot $ml={2}><MoreMark /></QuickSlot>
      </QuickAccess>
      <WindowTitle $ls={-0.27}>Housekeeping - Accommodation Staffing</WindowTitle>
      <Controls pr={5} />
    </TitleBar>
    <TabLine>
      <AppButton><Swoosh w={22} /></AppButton>
      <HomeTab>Home</HomeTab>
    </TabLine>
    <Ribbon>
      <RibbonGroup $w={117} $pl={10}>
        <RibbonButtons>
          <RibbonButton w={42} icon={<PageIcon />}>New</RibbonButton>
          <RibbonButton w={52} off icon={<CubesIcon />}>Clone...</RibbonButton>
        </RibbonButtons>
        <RibbonCaption $pl={10}>Records Creation</RibbonCaption>
      </RibbonGroup>
      <RibbonGroup $w={296} $pl={7}>
        <RibbonButtons>
          <RibbonButton w={36} icon={<SaveIcon />}>Save</RibbonButton>
          <RibbonButton w={66} icon={<SaveCloseIcon />}>Save and<br />Close</RibbonButton>
          <RibbonButton w={76} icon={<SaveNewIcon />}>Save and New</RibbonButton>
          <RibbonButton w={64} icon={<SaveCloneIcon />}>Save and<br />Clone</RibbonButton>
          <RibbonButton w={38} icon={<UndoIcon />}>Cancel</RibbonButton>
        </RibbonButtons>
        <RibbonCaption $pl={7}>Save</RibbonCaption>
      </RibbonGroup>
      <RibbonGroup $w={170} $pl={5}>
        <RibbonButtons>
          <RibbonButton w={44} icon={<SpellIcon />}>Check<br />Spelling</RibbonButton>
          <RibbonButton w={72} icon={<CalcIcon />}>Recalculate</RibbonButton>
          <RibbonButton w={42} icon={<CrossIcon />}>Delete</RibbonButton>
        </RibbonButtons>
        <RibbonCaption $pl={5}>Edit</RibbonCaption>
      </RibbonGroup>
      <RibbonGroup $w={137} $pl={5}>
        <RibbonButtons>
          <RibbonButton w={124} off icon={<RelatedIcon />}>Open Related<br />Record</RibbonButton>
        </RibbonButtons>
        <RibbonCaption $pl={5}>Open Related Record</RibbonCaption>
      </RibbonGroup>
      <RibbonGroup $w={104} $pl={6}>
        <RibbonButtons>
          <RibbonButton w={44} off icon={<RefreshIcon />}>Refresh</RibbonButton>
          <RibbonButton w={52} icon={<AuditIcon />}>Audit<br />Log</RibbonButton>
        </RibbonButtons>
        <RibbonCaption $pl={6}>View</RibbonCaption>
      </RibbonGroup>
      <RibbonGroup $w={180} $pl={4}>
        <RibbonButtons>
          <RibbonButton w={42} icon={<BinocularsIcon />}>Find</RibbonButton>
          <RibbonButton w={56} off icon={<ArrowBallIcon />}>Previous<br />Record</RibbonButton>
          <RibbonButton w={72} off icon={<ArrowBallIcon down />}>Next Record</RibbonButton>
        </RibbonButtons>
        <RibbonCaption $pl={4}>Records Navigation</RibbonCaption>
      </RibbonGroup>
      <RibbonGroup $w={60} $pl={4}>
        <RibbonButtons>
          <RibbonButton w={48} icon={<CloseBoxIcon />}>Close</RibbonButton>
        </RibbonButtons>
        <RibbonCaption $pl={4}>Close</RibbonCaption>
      </RibbonGroup>
      <LogoGroup>
        <LogoRow>
          <Swoosh w={36} />
          <LogoWord $size={19}>EVent<LogoPro>Pro</LogoPro></LogoWord>
        </LogoRow>
        <Collapse><Chev up color="#666" w={10} /></Collapse>
      </LogoGroup>
    </Ribbon>
    <FrontBody>
      <Columns>
        <LeftCol>
          <GroupBox $w="100%" $h={155}>
            <GroupTitle>Staffing Item</GroupTitle>
            <Field label="Staffing Item:*" w={116} value="Housekeeping"><Lookup /></Field>
            <Field label="Description:" w={116} value="Housekeeping" />
            <Field label="Additional Information:" w={116} value="" />
            <Field label="Supplier:" w={116} value=""><Lookup /></Field>
            <Row>
              <Label $w={116}>Setup Sheet</Label>
              <CheckBox>
                <Svg size={11} vb={11}>
                  <path d="M1.500 5.500l3 3 5-6.500" fill="none" stroke="#333" strokeWidth="1.800" />
                </Svg>
              </CheckBox>
            </Row>
            <Field label="Item #:" w={116} value="0" align="right"><Spin /></Field>
          </GroupBox>
          <LowerRow>
            <GroupBox $w="354px" $h={138} $mt={4}>
              <GroupTitle>Times</GroupTitle>
              <Field label="Required Date:" w={105} value="Wed Jan 12 2022"><Drop /></Field>
              <Field label="Required From Time:" w={105} value="8:00 PM" />
              <Field label="Required To Time:" w={105} value="10:00 PM" />
            </GroupBox>
            <Splitter $mt={64} />
            <StaffCol>
              <Tabs>
                <Tab $w={81} $on>Actual Staff</Tab>
                <Tab $w={91}>Charged Staff</Tab>
              </Tabs>
              <Pane $h={119}>
                <Field label="# Staff (Actual):" w={85} value="1" align="right"><Spin /></Field>
                <Field label="Hours (Actual):" w={85} value="2.00" align="right"><Spin /></Field>
                <Field label="Total Available:" w={85} value="0" align="right" tone="read" />
                <Field label="Other Required:" w={85} value="0" align="right" tone="read" />
                <Field label="Shortage:" w={85} value="0" align="right" tone="good" />
              </Pane>
            </StaffCol>
          </LowerRow>
        </LeftCol>
        <Splitter $mt={148} />
        <RightCol>
          <Tabs>
            <Tab $w={63} $on>Charges</Tab>
            <Tab $w={45}>Cost</Tab>
            <Tab $w={63}>Financial</Tab>
          </Tabs>
          <Pane $h={281} $pt={4}>
            <Row>
              <Label $w={108}>Lock Charges</Label>
              <CheckBox />
            </Row>
            <Field label="Bill To Type:" w={108} value="Attendee"><Drop /></Field>
            <Field label="Rate Type:" w={108} value="Regular"><Drop hot /></Field>
            <Field label="Charge:" w={108} value="$24.00" align="right"><Spin /></Field>
            <Field label="Total Charge:" w={108} value="$24.00" align="right" tone="read" />
            <Field label="Surcharge:" w={108} value="$0.00" align="right"><Spin /></Field>
            <Field label="Discount Type:" w={108} value="Flat Amount"><Drop /></Field>
            <Field label="Discount:" w={108} value="$0.00" align="right" mt={1}><Spin /></Field>
            <Field label="Net Charge:" w={108} value="$24.00" align="right" tone="read" />
            <Field label="Charge Taxes:" w={108} value="FS"><Lookup /></Field>
            <Field label="Charge Tax Total:" w={108} value="$2.88" align="right" tone="read" />
            <Field label="Net Charge Inc Tax:" w={108} value="$26.88" align="right" tone="read" />
            <DropList>
              <DropItem>Regular</DropItem>
              <DropItem $hover>Overtime 1</DropItem>
              <DropItem>Overtime 2</DropItem>
              <DropItem>Flat Rate</DropItem>
            </DropList>
          </Pane>
        </RightCol>
      </Columns>
      <Notes />
    </FrontBody>
    <Footer $h={23} $mt={5}><Grip /></Footer>
  </FrontWindow>
);

const App = () => (
  <Desktop>
    <GlobalStyle />
    <SharedGradients />
    <BackWindowContent />
    <FrontWindowContent />
    <RedArrow width="1343" height="628" viewBox="0 0 1343 628">
      <polygon points="1222,265 1250,273 1245,282 1322,340 1322,345 1314,345 1243,289 1237,292" fill="#ff0000" />
    </RedArrow>
  </Desktop>
);

export default App;
